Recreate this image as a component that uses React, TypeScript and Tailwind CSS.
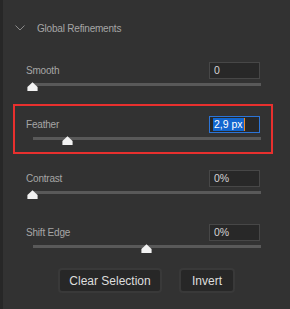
import React from "react";

type Row = {
  label: string;
  value: string;
  pos: number;
  active?: boolean;
};

const rows: Row[] = [
  { label: "Smooth", value: "0", pos: 0 },
  { label: "Feather", value: "2,9 px", pos: 15.4, active: true },
  { label: "Contrast", value: "0%", pos: 0 },
  { label: "Shift Edge", value: "0%", pos: 50 },
];

function Thumb({ pos }: { pos: number }) {
  return (
    <svg
      width="11"
      height="9"
      viewBox="0 0 11 9"
      className="absolute top-[-1px]"
      style={{ left: `calc(${pos}% - 6px)` }}
    >
      <path d="M5.5 0.3 L10.6 5 L10.6 9 L0.4 9 L0.4 5 Z" fill="#f2f2f2" strokeLinejoin="round" />
    </svg>
  );
}

function SliderRow({ row }: { row: Row }) {
  return (
    <div
      className={`ml-[10px] w-[260px] h-[50px] border-2 pt-[10px] ${
        row.active ? "border-[#e8302e]" : "border-transparent"
      }`}
    >
      <div className="flex h-[17px] items-center justify-between pl-[11px] pr-[11px]">
        <span className="text-[10px] tracking-[-0.2px] text-[#a6a6a6]">{row.label}</span>
        {row.active ? (
          <div className="flex h-[17px] w-[51px] items-center border border-[#2c74d6] bg-[#282828] pl-[3px]">
            <span className="flex h-[13px] items-center bg-[#1266cf] px-[1px] text-[10.5px] text-white">
              {row.value}
            </span>
            <span className="h-[13px] w-px bg-[#f08a24]" />
          </div>
        ) : (
          <div className="flex h-[17px] w-[51px] items-center border border-[#474747] bg-[#282828] pl-[4px] text-[10.5px] text-[#d4d4d4]">
            {row.value}
          </div>
        )}
      </div>
      <div className="relative mt-[4px] ml-[18px] mr-[10px] h-[3px] bg-[#595959]">
        <Thumb pos={row.pos} />
      </div>
    </div>
  );
}

export default function App() {
  return (
    <div
      className="flex h-[309px] w-[290px] overflow-hidden bg-[#323232]"
      style={{ fontFamily: '"Liberation Sans", Arial, sans-serif' }}
    >
      <div className="w-[3px] bg-[#272727]" />
      <div className="flex flex-1 flex-col">
        {/* Header */}
        <div className="h-[50px] pt-[19px]">
          <div className="flex h-[18px] items-center">
            <svg width="10" height="6" viewBox="0 0 10 6" className="ml-[12px]">
              <path d="M0.5 0.5 L5 5 L9.5 0.5" fill="none" stroke="#8a8a8a" strokeWidth="1" />
            </svg>
            <span className="ml-[12px] text-[10px] tracking-[-0.2px] text-[#a6a6a6]">
              Global Refinements
            </span>
          </div>
        </div>

        {/* Sliders */}
        <div className="flex flex-col gap-[4px]">
          {rows.map((row) => (
            <SliderRow key={row.label} row={row} />
          ))}
        </div>

        {/* Buttons */}
        <div className="mt-[6px] flex justify-center gap-[17px]">
          <button className="h-[25px] w-[104px] rounded-[4px] border-2 border-[#393939] bg-[#272727] text-[12px] text-[#dedede]">
            Clear Selection
          </button>
          <button className="h-[25px] w-[56px] rounded-[4px] border-2 border-[#393939] bg-[#272727] text-[12px] text-[#dedede]">
            Invert
          </button>
        </div>
      </div>
    </div>
  );
}
